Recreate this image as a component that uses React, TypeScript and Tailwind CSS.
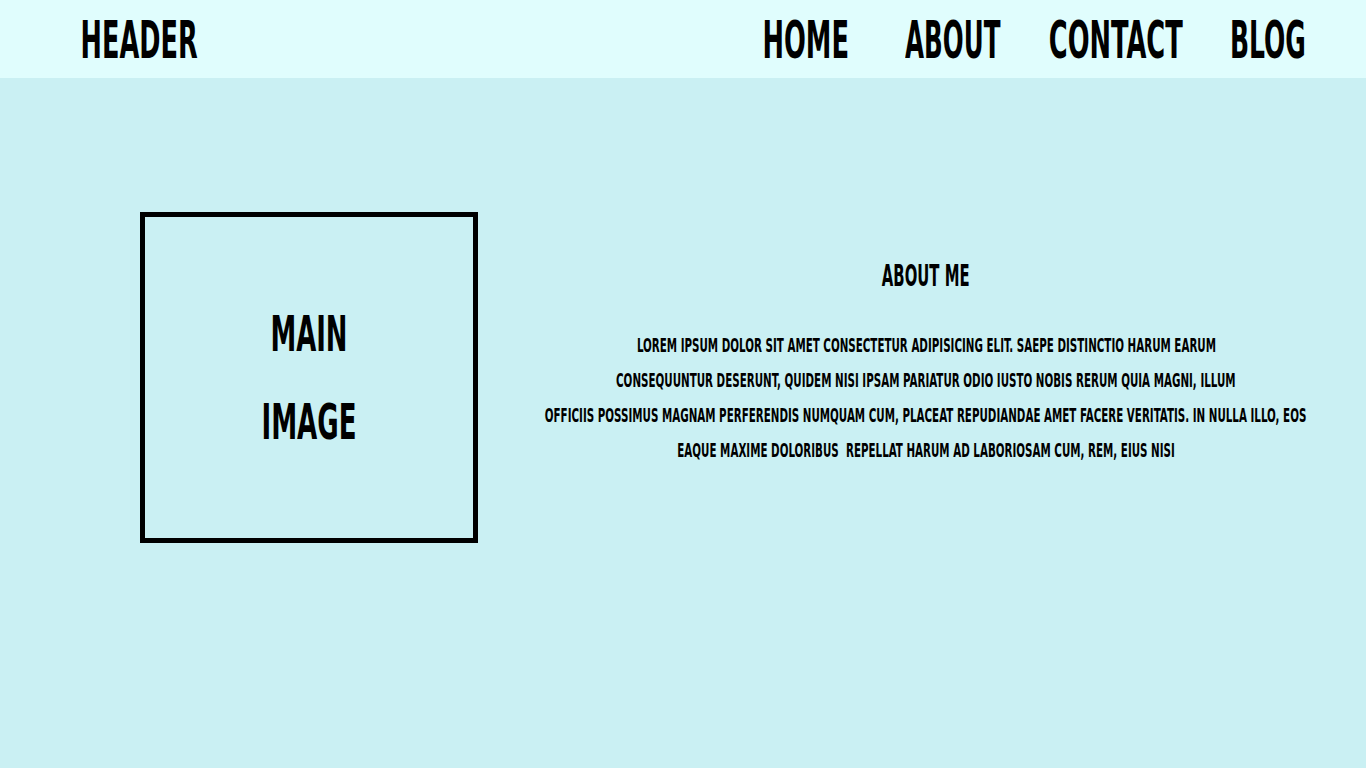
import type { ReactNode } from 'react'

// condensed display face stand-in: bold condensed squeezed horizontally
function Squeeze({
  children,
  className = '',
  squeeze = 'scale-x-[0.55]',
}: {
  children: ReactNode
  className?: string
  squeeze?: string
}) {
  return (
    <div className={`flex justify-center ${className}`}>
      <span className={`inline-block whitespace-pre font-bold ${squeeze}`}>{children}</span>
    </div>
  )
}

const navLinks = [
  { label: 'HOME', w: 'w-[86px] mr-[8px]', s: 'scale-x-[0.55]' },
  { label: 'ABOUT', w: 'w-[97px]', s: 'scale-x-[0.525]' },
  { label: 'CONTACT', w: 'w-[135px]', s: 'scale-x-[0.55]' },
  { label: 'BLOG', w: 'w-[76px]', s: 'scale-x-[0.535]' },
]

const lines = [
  'LOREM IPSUM DOLOR SIT AMET CONSECTETUR ADIPISICING ELIT. SAEPE DISTINCTIO HARUM EARUM',
  'CONSEQUUNTUR DESERUNT, QUIDEM NISI IPSAM PARIATUR ODIO IUSTO NOBIS RERUM QUIA MAGNI, ILLUM',
  'OFFICIIS POSSIMUS MAGNAM PERFERENDIS NUMQUAM CUM, PLACEAT REPUDIANDAE AMET FACERE VERITATIS. IN NULLA ILLO, EOS',
  'EAQUE MAXIME DOLORIBUS  REPELLAT HARUM AD LABORIOSAM CUM, REM, EIUS NISI',
]

export default function App() {
  return (
    <div
      className="min-h-screen bg-[#caf0f3] text-black"
      style={{ fontFamily: '"DejaVu Sans Condensed", "DejaVu Sans", sans-serif' }}
    >
      {/* Header */}
      <header className="h-[78px] bg-[#e0fdfd] flex items-center justify-between pl-[80px] pr-[60px] pt-[2px]">
        <Squeeze className="w-[118px] text-[52px] leading-none" squeeze="scale-x-[0.547]">
          HEADER
        </Squeeze>
        <nav className="flex items-center gap-[47px]">
          {navLinks.map((l) => (
            <Squeeze key={l.label} className={`${l.w} text-[52px] leading-none`} squeeze={l.s}>
              {l.label}
            </Squeeze>
          ))}
        </nav>
      </header>

      {/* Content */}
      <main className="flex pt-[134px] pl-[140px]">
        <div className="w-[338px] h-[331px] border-[5px] border-black flex flex-col justify-center">
          <Squeeze className="text-[50px] leading-[88px]" squeeze="scale-x-[0.575]">MAIN</Squeeze>
          <Squeeze className="text-[50px] leading-[88px]" squeeze="scale-x-[0.58]">IMAGE</Squeeze>
        </div>

        <section className="w-[772px] ml-[62px] pt-[49px]">
          <Squeeze className="text-[30px] leading-[30px]" squeeze="scale-x-[0.55]">ABOUT ME</Squeeze>
          <div className="mt-[37px]">
            {lines.map((t, i) => (
              <Squeeze key={i} className="text-[19.5px] leading-[35px]" squeeze="scale-x-[0.588]">
                {t}
              </Squeeze>
            ))}
          </div>
        </section>
      </main>
    </div>
  )
}
